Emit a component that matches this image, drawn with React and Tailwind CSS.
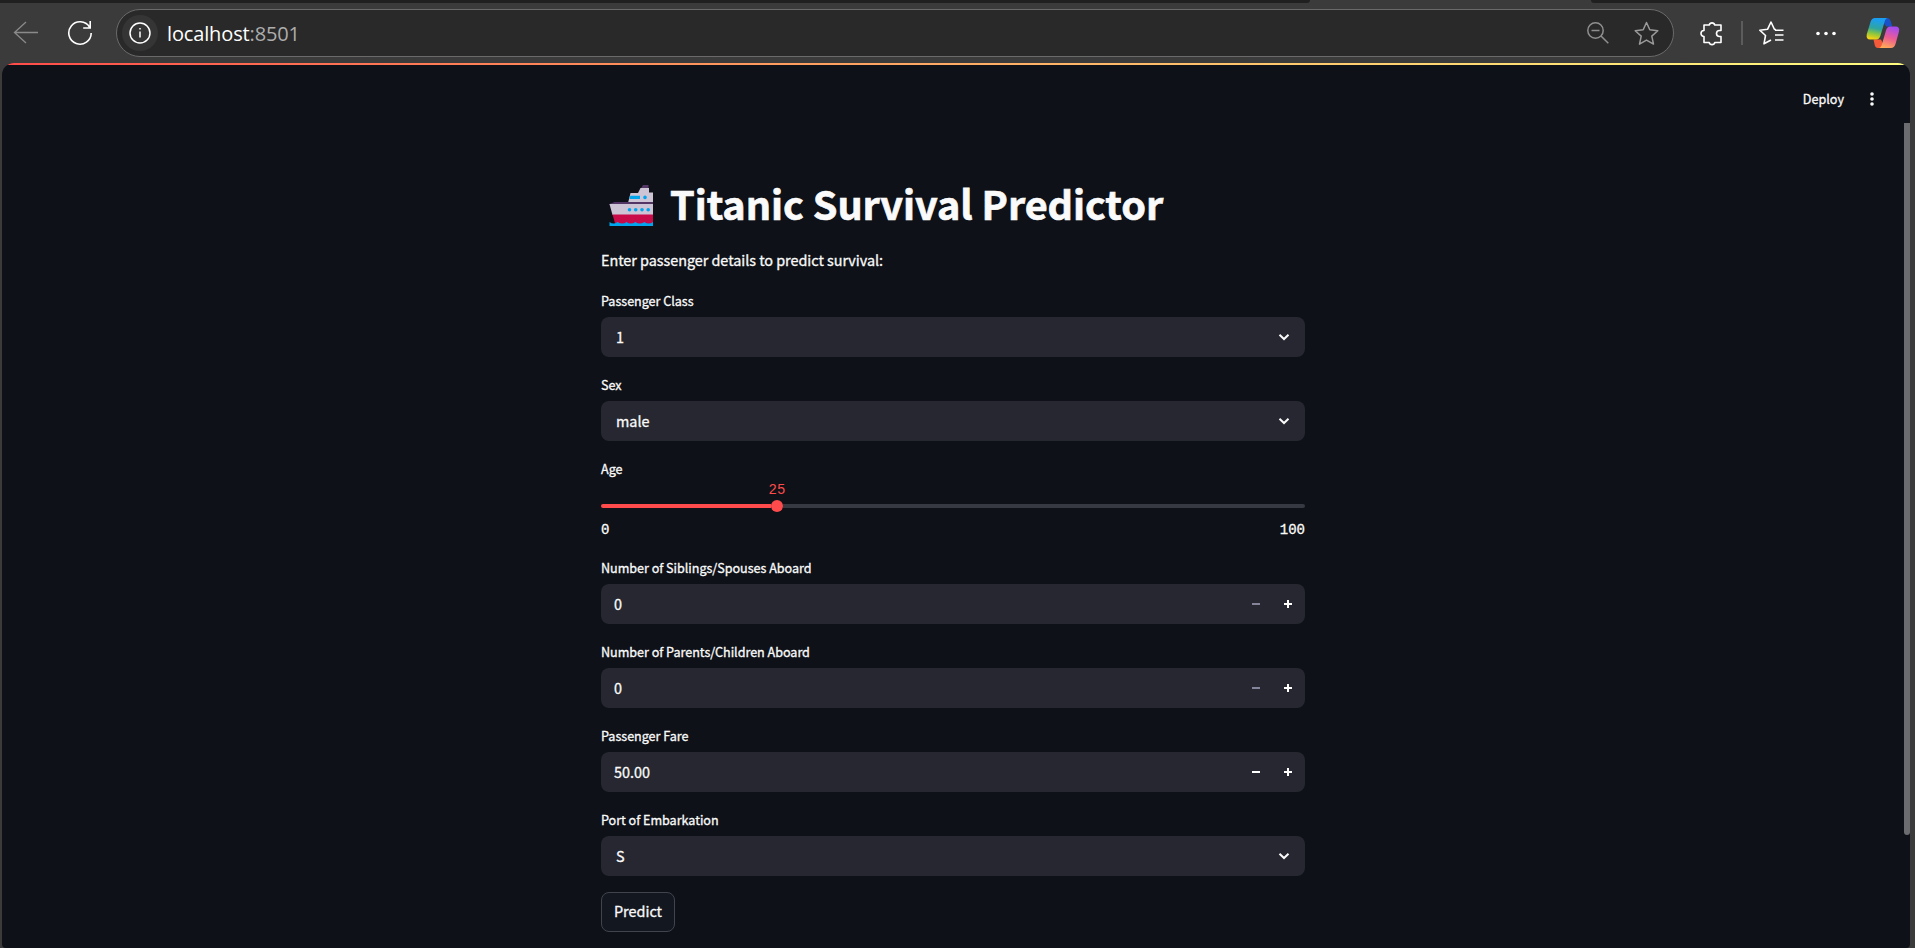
const sans = "font-['Noto_Sans_CJK_SC',sans-serif]";

function Label({ children }) {
  return <div className="h-6 text-[12.6px] leading-6 tracking-[-0.03px] whitespace-nowrap">{children}</div>;
}

function Box({ children, pad }) {
  return (
    <div className={`mt-1 flex h-10 items-center justify-between rounded-lg bg-[#262730] text-[14.4px] leading-6 ${pad}`}>
      {children}
    </div>
  );
}

function Select({ label, value }) {
  return (
    <div className="h-[68px]">
      <Label>{label}</Label>
      <Box pad="pl-[15px] pr-[15px]">
        <span>{value}</span>
        <svg width="12" height="8" viewBox="0 0 12 8" fill="none" stroke="#fafafa" strokeWidth="2">
          <path d="M1.500 1.700 6 6 10.500 1.700" />
        </svg>
      </Box>
    </div>
  );
}

function NumberInput({ label, value, dim }) {
  return (
    <div className="h-[68px]">
      <Label>{label}</Label>
      <Box pad="pl-[13px] pr-[13px]">
        <span>{value}</span>
        <div className="flex items-center gap-6">
          <svg width="8" height="8" viewBox="0 0 8 8" className={dim ? "text-[#83849a]" : "text-white"}>
            <path d="M0 3h8v2H0z" fill="currentColor" />
          </svg>
          <svg width="8" height="8" viewBox="0 0 8 8" className="text-white">
            <path d="M0 3h3V0h2v3h3v2H5v3H3V5H0z" fill="currentColor" />
          </svg>
        </div>
      </Box>
    </div>
  );
}

function Slider() {
  return (
    <div className="h-[83px]">
      <Label>Age</Label>
      <div className="mb-0.5 flex h-[17px] w-[352px] items-end justify-center pt-px font-['Liberation_Mono',monospace] text-[14px] leading-4 text-[#ff4b4b] [-webkit-text-stroke:0]">
        25
      </div>
      <div className="flex h-3 items-center">
        <div className="h-1 w-[170px] rounded-l-full bg-[#ff4b4b]" />
        <div className="size-3 rounded-full bg-[#ff4b4b]" />
        <div className="h-1 flex-1 rounded-r-full bg-[#363941]" />
      </div>
      <div className="mt-2 flex justify-between font-['Liberation_Mono',monospace] text-[14px] leading-5">
        <span>0</span>
        <span>100</span>
      </div>
    </div>
  );
}

function Ship() {
  return (
    <svg width="44" height="42" viewBox="0 0 44 42">
      <path d="M34 0h5.500v4h-8z" fill="#533566" />
      <path d="M31.500 3H40v4.500h4V18H19l2.500-10H29z" fill="#cdc4d6" />
      <path d="M0.500 19l5-2H44v3H0.500z" fill="#533566" />
      <path d="M0.500 19H44v11H3.500z" fill="#cdc4d6" />
      <path d="M3.500 29.500H44V40H6.500z" fill="#ca0b4a" />
      <path d="M21.500 10.800h9.500v3.200H20.500q-.5-2 1-3.200z" fill="#00a6ed" />
      <g fill="#00a6ed">
        <circle cx="36" cy="12.400" r="1.800" />
        <circle cx="20.500" cy="24.800" r="1.800" />
        <circle cx="26.700" cy="24.800" r="1.800" />
        <circle cx="33" cy="24.800" r="1.800" />
        <circle cx="39.200" cy="24.800" r="1.800" />
      </g>
      <path d="M0.500 37q4 3 8 0q5 3 9 0q4 3 9 0q4 3 9 0q4 3 8.500 0v4H0.500z" fill="#00a6ed" />
    </svg>
  );
}

function Toolbar() {
  return (
    <div className="flex h-[60px] shrink-0 items-start bg-[#3b3b3b] pl-[13px]">
      <svg className="mt-[18px]" width="26" height="24" viewBox="0 0 26 24" fill="none" stroke="#8a8a8a" strokeWidth="1.300">
        <path d="M25 11.500H1.500M13 1 1.500 11.500 13 22" />
      </svg>
      <svg className="mt-[17px] ml-[28px]" width="26" height="26" viewBox="0 0 26 26" fill="none" stroke="#fff" strokeWidth="1.600">
        <path d="M22.500 7A11.200 11.200 0 1 0 24.200 13M23.200 1v7h-7" />
      </svg>
      <div className="mt-[6px] ml-[23px] flex h-12 w-[1558px] items-center rounded-full border border-[#6a6a6a] bg-[#292929] pl-[5px]">
        <div className="flex size-9 items-center justify-center rounded-full bg-[#353535]">
          <svg width="22" height="22" viewBox="0 0 22 22" fill="none" stroke="#fff" strokeWidth="1.500">
            <circle cx="11" cy="11" r="10" />
            <path d="M11 9.500v6" />
            <circle cx="11" cy="6.800" r="0.500" fill="#fff" strokeWidth="0.800" />
          </svg>
        </div>
        <span className="ml-[9px] flex-1 pt-px font-['Open_Sans',sans-serif] text-[20px] leading-8 tracking-[-0.14px] text-white">
          localhost<span className="text-[#adadad]">:8501</span>
        </span>
        <svg width="22" height="22" viewBox="0 0 22 22" fill="none" stroke="#8f8f8f" strokeWidth="1.500">
          <circle cx="8.500" cy="8.500" r="7.700" />
          <path d="M4.500 8.500h8M14 14l7.300 7.300" />
        </svg>
        <svg className="mr-[14px] ml-[25px]" width="25" height="25" viewBox="0 0 25 25" fill="none" stroke="#9a9a9a" strokeWidth="1.500" strokeLinejoin="round">
          <path d="m12.500 1.500 3.300 7.300 8 .9-6 5.400 1.700 8-7-4-7 4 1.700-8-6-5.400 8-.9z" />
        </svg>
      </div>
      <svg className="mt-[18px] ml-[26px]" width="23" height="25" viewBox="0 0 23 25" fill="none" stroke="#fff" strokeWidth="1.600" strokeLinejoin="round">
        <path d="M4 4h5.200a2.900 2.900 0 0 1 5.600 0H21v5.500h-1.500a3 3 0 0 0 0 6H21v6h-6.200a2.900 2.900 0 0 1-5.600 0H4v-6a3 3 0 0 1 0-6z" />
      </svg>
      <div className="mt-[18px] ml-[18px] h-6 w-0.5 bg-[#5c5c5c]" />
      <svg className="mt-[18px] ml-[16px]" width="25" height="24" viewBox="0 0 25 24" fill="none" stroke="#fff" strokeWidth="1.600" strokeLinejoin="round">
        <path d="M17 8.500h-1.500L12 1 8.500 8.300l-7.700.9 5.700 5.300L5 22.800l7-3.800M16 9.200h8.500M16 14h8.500M16 19h8.500" />
      </svg>
      <svg className="mt-[28px] ml-[32px]" width="20" height="5" viewBox="0 0 20 5" fill="#fff">
        <circle cx="2" cy="2.500" r="1.800" />
        <circle cx="10" cy="2.500" r="1.800" />
        <circle cx="18" cy="2.500" r="1.800" />
      </svg>
      <svg className="mt-[14px] ml-[30px] shrink-0" width="34" height="32" viewBox="0 0 34 32">
        <defs>
          <linearGradient id="left" x1="0.600" y1="0" x2="0.400" y2="1">
            <stop offset="0.100" stopColor="#1b9df0" />
            <stop offset="0.500" stopColor="#2fa5a0" />
            <stop offset="0.750" stopColor="#8cc63f" />
            <stop offset="1" stopColor="#f6d313" />
          </linearGradient>
          <linearGradient id="right" x1="0.600" y1="0" x2="0.300" y2="1">
            <stop offset="0" stopColor="#a64bf0" />
            <stop offset="0.500" stopColor="#ec5c92" />
            <stop offset="1" stopColor="#ffac55" />
          </linearGradient>
        </defs>
        <path d="M15 1h6q3 0 4 4l1.200 4.500H20z" fill="#1a50c8" />
        <path d="M19 31h-7q-3 0-3.500-4L7.500 22.500H15z" fill="#f4593a" />
        <path d="M9 1h13q-2.500 0-3.500 4l-4 13.500q-1.200 4-4 4H4q-4 0-3.300-5L4.500 5q1.200-4 4.500-4z" fill="url(#left)" />
        <path d="M25 31H12.500q2.500 0 3.500-4l4-13.500q1.200-4 4-4h5.500q4.500 0 3.500 5L29.500 27q-1.200 4-4.500 4z" fill="url(#right)" />
      </svg>
    </div>
  );
}

export default function App() {
  return (
    <div className={`flex h-[948px] w-[1915px] flex-col overflow-hidden bg-[#3b3b3b] text-[#fafafa] ${sans}`}>
      <div className="flex h-[3px] shrink-0 justify-between">
        <div className="w-[1310px] rounded-br-[3px] bg-[#202020]" />
        <div className="w-[324px] rounded-bl-[3px] bg-[#202020]" />
      </div>
      <Toolbar />
      <div className="mr-[5px] ml-[2px] flex h-[885px] flex-col overflow-hidden rounded-t-[12px] rounded-b-[4px] bg-[#0e1117] [-webkit-text-stroke:0.3px]">
        <div className="h-0.5 shrink-0 bg-linear-to-r from-[#ff4b4b] to-[#fffd80]" />
        <div className="flex flex-1">
          <div className="flex flex-1 flex-col">
            <div className="flex h-[68px] items-center justify-end pr-[29px]">
              <span className="text-[12.6px] leading-6">Deploy</span>
              <svg className="ml-[25px]" width="6" height="14" viewBox="0 0 6 14" fill="#fafafa">
                <circle cx="3" cy="2" r="1.800" />
                <circle cx="3" cy="7" r="1.800" />
                <circle cx="3" cy="12" r="1.800" />
              </svg>
            </div>
            <div className="ml-[599px] w-[704px]">
              <h1 className="mt-[43px] flex h-[53px] items-center pl-2 text-[39.6px] leading-[53px] font-bold whitespace-nowrap">
                <span className="pt-[7px]">
                  <Ship />
                </span>
                <span className="ml-[17px] tracking-[-0.05px] [-webkit-text-stroke:0.7px]">Titanic Survival Predictor</span>
              </h1>
              <p className="mt-[19px] h-6 text-[14.4px] leading-6 tracking-[-0.03px] whitespace-nowrap">Enter passenger details to predict survival:</p>
              <div className="mt-[17px] flex flex-col gap-4">
                <Select label="Passenger Class" value="1" />
                <Select label="Sex" value="male" />
                <Slider />
                <NumberInput label="Number of Siblings/Spouses Aboard" value="0" dim />
                <NumberInput label="Number of Parents/Children Aboard" value="0" dim />
                <NumberInput label="Passenger Fare" value="50.00" />
                <Select label="Port of Embarkation" value="S" />
                <button className="flex h-10 w-[74px] items-center justify-center rounded-lg border border-[#41444c] bg-[#131720] pb-0.5 text-[14.4px] leading-6">
                  Predict
                </button>
              </div>
            </div>
          </div>
          <div className="mt-[58px] h-[712px] w-[6px] rounded-b-full bg-[#6b6c70]" />
        </div>
      </div>
    </div>
  );
}
